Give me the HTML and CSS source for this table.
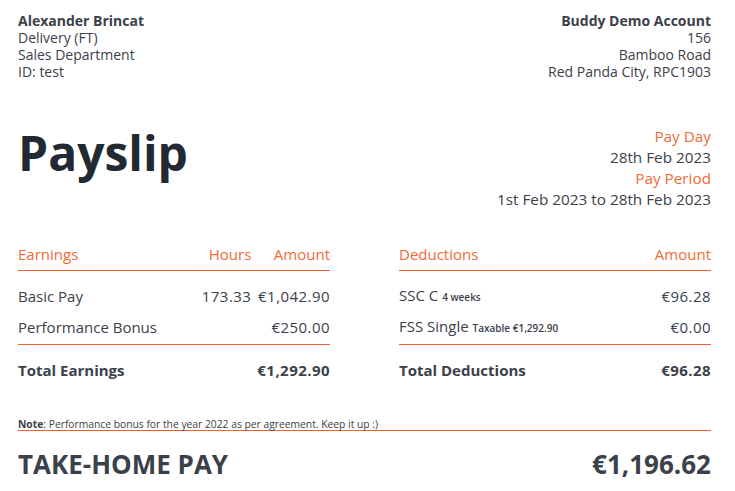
FILE: index.html
```html
<!DOCTYPE html>
<html lang="en">
<head>
  <title>Payslip</title>
  <meta charset="UTF-8">
  <link rel="stylesheet" href="styles.css">
</head>
<body>
  <div class="payslip">
    <div class="parties">
      <div class="party">
        <div class="party-name">Alexander Brincat</div>
        <div>Delivery (FT)</div>
        <div>Sales Department</div>
        <div>ID: test</div>
      </div>
      <div class="party party-right">
        <div class="party-name">Buddy Demo Account</div>
        <div>156</div>
        <div>Bamboo Road</div>
        <div>Red Panda City, RPC1903</div>
      </div>
    </div>

    <div class="title-row">
      <h1>Payslip</h1>
      <div class="dates">
        <div class="label">Pay Day</div>
        <div>28th Feb 2023</div>
        <div class="label">Pay Period</div>
        <div>1st Feb 2023 to 28th Feb 2023</div>
      </div>
    </div>

    <div class="tables">
      <table class="lines">
        <thead>
          <tr><th class="desc">Earnings</th><th class="num">Hours</th><th class="num">Amount</th></tr>
        </thead>
        <tbody>
          <tr><td class="desc">Basic Pay</td><td class="num">173.33</td><td class="num">€1,042.90</td></tr>
          <tr><td class="desc">Performance Bonus</td><td class="num"></td><td class="num">€250.00</td></tr>
        </tbody>
        <tfoot>
          <tr><td class="desc">Total Earnings</td><td class="num"></td><td class="num">€1,292.90</td></tr>
        </tfoot>
      </table>

      <table class="lines">
        <thead>
          <tr><th class="desc">Deductions</th><th class="num">Amount</th></tr>
        </thead>
        <tbody>
          <tr><td class="desc">SSC C <span class="sub">4 weeks</span></td><td class="num">€96.28</td></tr>
          <tr><td class="desc">FSS Single <span class="sub">Taxable €1,292.90</span></td><td class="num">€0.00</td></tr>
        </tbody>
        <tfoot>
          <tr><td class="desc">Total Deductions</td><td class="num">€96.28</td></tr>
        </tfoot>
      </table>
    </div>

    <div class="note"><b>Note</b>: Performance bonus for the year 2022 as per agreement. Keep it up :)</div>

    <div class="take-home">
      <div>TAKE-HOME PAY</div>
      <div>€1,196.62</div>
    </div>
  </div>
</body>
</html>
```

FILE: styles.css
```css
:root {
  --text-color: #3b414b;
  --title-color: #222932;
  --accent: #f26a35;
  --rule: #ee5f2c;
}
body {
  margin: 0;
  padding: 12px 24px 0 18px;
  background: #fff;
  color: var(--text-color);
  font-family: 'Open Sans', sans-serif;
}
.payslip {
  width: 693px;
}
.parties {
  display: flex;
  justify-content: space-between;
  font-size: 14px;
  line-height: 17px;
}
.party-right {
  text-align: right;
}
.party-name {
  font-weight: 700;
}
.title-row {
  display: flex;
  justify-content: space-between;
  align-items: flex-start;
  margin-top: 46px;
}
h1 {
  margin: 0;
  font-size: 48px;
  line-height: 54px;
  font-weight: 700;
  color: var(--title-color);
}
.dates {
  text-align: right;
  font-size: 15.3px;
  line-height: 21px;
}
.dates .label {
  color: var(--accent);
}
.tables {
  display: grid;
  grid-template-columns: 1fr 1fr;
  column-gap: 69px;
  margin-top: 34px;
}
.lines {
  width: 100%;
  border-collapse: collapse;
  font-size: 15px;
  line-height: 20px;
}
.lines th {
  font-weight: 400;
  color: var(--accent);
  padding: 0 0 6px;
  border-bottom: 1.5px solid var(--rule);
}
.lines td {
  padding: 5px 0 4px;
}
.lines .desc {
  width: 100%;
  text-align: left;
  white-space: nowrap;
}
.lines .num {
  text-align: right;
  white-space: nowrap;
  padding-left: 6px;
}
.lines td.num {
  letter-spacing: 0.45px;
}
.lines tbody tr:first-child td {
  padding-top: 14px;
}
.lines tbody tr:last-child td {
  padding-bottom: 6px;
  border-bottom: 1.5px solid var(--rule);
}
.lines tfoot td {
  padding-top: 15px;
  font-weight: 700;
}
.sub {
  font-size: 10px;
  font-weight: 600;
}
.note {
  margin-top: 35px;
  font-size: 10.3px;
  line-height: 11px;
  border-bottom: 1px solid var(--rule);
}
.take-home {
  display: flex;
  justify-content: space-between;
  margin-top: 17px;
  font-size: 26px;
  line-height: 32px;
  font-weight: 700;
}
```
